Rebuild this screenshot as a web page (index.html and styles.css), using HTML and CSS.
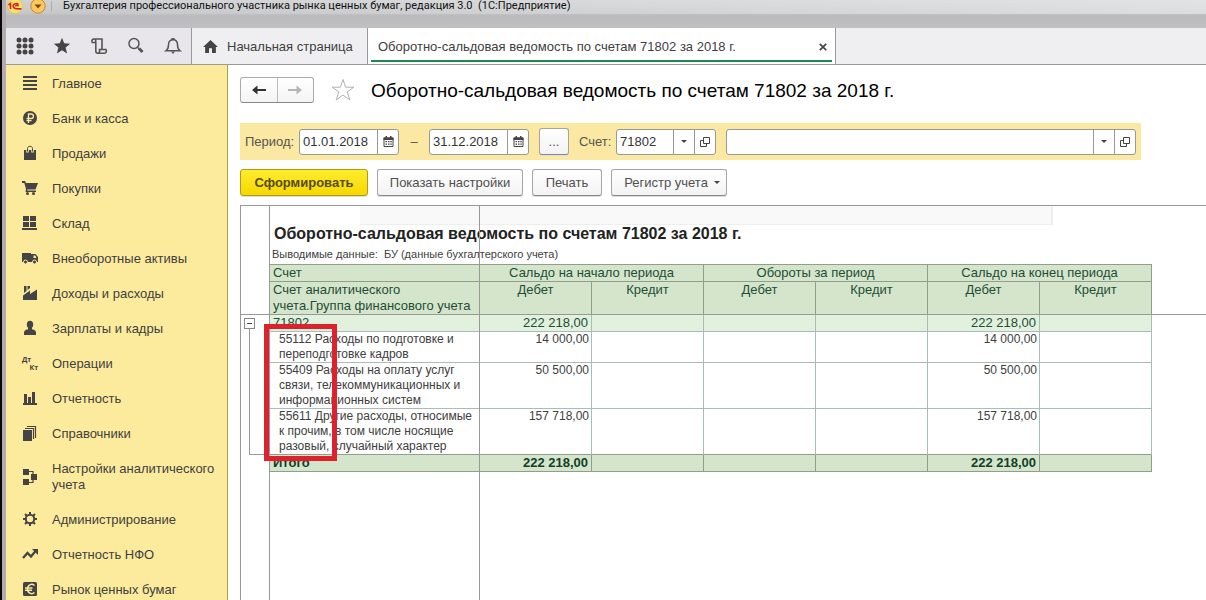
FILE: index.html
```html
<!DOCTYPE html>
<html lang="ru">
<head>
<meta charset="utf-8">
<title>Оборотно-сальдовая ведомость</title>
<link rel="stylesheet" href="styles.css">
</head>
<body>
<div class="window">
  <header class="titlebar">
    <svg class="logo" viewBox="0 0 16 16"><circle cx="8" cy="8" r="7.500" fill="#fbe26a" stroke="#e9c54c"/><path d="M1.500 7l2-1.500v5.500M11.500 6.500C10 4.800 6 5.500 6 8s3 3 8.500 2.800M11.500 8.200c-1-1.500-3-1-3 .3" fill="none" stroke="#d3202a" stroke-width="1.600"/></svg>
    <button class="menu-toggle" aria-label="Меню"><svg viewBox="0 0 16 16"><circle cx="8" cy="8" r="7.200" fill="#fcc75c" stroke="#c58a35"/><path d="M4.500 6.500h7L8 10.500z" fill="#7a4a12"/></svg></button>
    <span class="titlebar-sep"></span>
    <span class="titlebar-text">Бухгалтерия профессионального участника рынка ценных бумаг, редакция 3.0&nbsp; (1С:Предприятие)</span>
  </header>
  <nav class="tabs">
    <div class="tools">
      <button aria-label="Разделы"><svg viewBox="0 0 18 18" fill="#444"><circle cx="3" cy="3" r="2.500"/><circle cx="9" cy="3" r="2.500"/><circle cx="15" cy="3" r="2.500"/><circle cx="3" cy="9" r="2.500"/><circle cx="9" cy="9" r="2.500"/><circle cx="15" cy="9" r="2.500"/><circle cx="3" cy="15" r="2.500"/><circle cx="9" cy="15" r="2.500"/><circle cx="15" cy="15" r="2.500"/></svg></button>
      <button aria-label="Избранное"><svg viewBox="0 0 18 18"><path d="M9 .8l2.200 5.500 6 .4-4.600 3.800 1.500 5.900L9 13.200l-5.100 3.200 1.500-5.900L.8 6.700l6-.4z" fill="#444"/></svg></button>
      <button aria-label="История"><svg viewBox="0 0 18 18" fill="none" stroke="#555" stroke-width="1.600"><path d="M5.500 5.500H2.200C1.200 3.500 2.500 2 4 2h8v10.500M4 2c1.500 0 1.800 1 1.800 2.200V14c0 1.500 1 2.200 2 2.200h6.500c2 0 2.500-2 1.700-3.700H9.500c.5 2-.2 3.700-1.700 3.700"/></svg></button>
      <button aria-label="Поиск"><svg viewBox="0 0 18 18" fill="none" stroke="#555"><circle cx="7" cy="6.500" r="5" stroke-width="1.500"/><path d="M10.500 10.200l1.500 1.500" stroke-width="1.500"/><path d="M12 11.500l3.500 3.500" stroke-width="3"/></svg></button>
      <button aria-label="Уведомления"><svg viewBox="0 0 18 18"><path d="M2 13.800c2-1.500 2.500-3 2.500-6C4.500 4.500 6.500 2.800 9 2.800s4.500 1.700 4.500 5c0 3 .5 4.500 2.500 6z" fill="none" stroke="#555" stroke-width="1.500"/><path d="M7.500 1h3v2h-3zM7 14.500h4L9 17z" fill="#555"/></svg></button>
    </div>
    <button class="tab tab-home"><svg viewBox="0 0 16 14"><path d="M8 0l8 7.500h-2.200V14H9.600V9H6.400v5H2.200V7.500H0z" fill="#444"/></svg>Начальная страница</button>
    <div class="tab-active"><a href="#report">Оборотно-сальдовая ведомость по счетам 71802 за 2018 г.</a><button aria-label="Закрыть"><svg viewBox="0 0 8 8"><path d="M.8.8l6.400 6.400M7.200.8L.8 7.200" stroke="#444" stroke-width="1.700"/></svg></button></div>
  </nav>
  <div class="body">
    <aside class="sidebar">
      <a href="#"><svg viewBox="0 0 16 16"><path d="M1 1h14v2H1zM1 5h14v2H1zM1 9h14v2H1zM1 13h14v2H1z"/></svg>Главное</a>
      <a href="#"><svg viewBox="0 0 16 16"><circle cx="8" cy="8" r="7"/><path d="M6.500 13V4h2.700c3 0 3 4.500 0 4.500H4.500M4.500 10.700h5" fill="none" stroke="#fdeb9d" stroke-width="1.300"/></svg>Банк и касса</a>
      <a href="#"><svg viewBox="0 0 16 16"><path d="M2 5h12v10H2z"/><path d="M5.500 7.500V3.500c0-3 5-3 5 0v4" fill="none" stroke="#fdeb9d" stroke-width="2.500"/><path d="M5.500 6.500v-3c0-3 5-3 5 0v3" fill="none" stroke="#444" stroke-width="1"/></svg>Продажи</a>
      <a href="#"><svg viewBox="0 0 16 16"><path d="M0 1h3l1 2h12l-2.500 6.500H5.500l-.5 1h9V12H3.500L4 9 2.300 3H0z"/><circle cx="5.500" cy="13.500" r="1.500"/><circle cx="11.500" cy="13.500" r="1.500"/></svg>Покупки</a>
      <a href="#"><svg viewBox="0 0 16 16"><path d="M1 1h6v5H1zM8 1h6v5H8zM1 7h6v5H1zM8 7h6v5H8zM0 13h15v2H0z"/></svg>Склад</a>
      <a href="#"><svg viewBox="0 0 16 16"><path d="M0 3h9v9H0zM9 4h4.500L16 7v5H9z"/><path d="M11.500 5.500h1.800L14.500 8h-3z" fill="#fdeb9d"/><circle cx="3.500" cy="12" r="2" stroke="#fdeb9d"/><circle cx="12.500" cy="12" r="2" stroke="#fdeb9d"/></svg>Внеоборотные активы</a>
      <a href="#"><svg viewBox="0 0 16 16"><path d="M1 15V10.500L8 5.500V9l7-4.500V15zM2 1h2.500v5L2 8zM5.500 1H8v2L5.500 5z"/></svg>Доходы и расходы</a>
      <a href="#"><svg viewBox="0 0 16 16"><ellipse cx="8" cy="4.500" rx="3.200" ry="3.800"/><path d="M6 7h4v2.500H6zM2 15v-2.500C2 10.500 4 9.500 6 9.300h4c2 .2 4 1.200 4 3.200V15z"/></svg>Зарплаты и кадры</a>
      <a href="#"><span class="dtkt"><b>Дт</b><b>Кт</b></span>Операции</a>
      <a href="#"><svg viewBox="0 0 16 16"><path d="M2 4h3v9H2zM6 7h3v6H6zM10 2h3v11h-3zM1 13h14v2H1z"/></svg>Отчетность</a>
      <a href="#"><svg viewBox="0 0 16 16"><path d="M1 5h9v11H1z"/><path d="M3 3.500h8.500V14M5 1.500h8.500V13" fill="none" stroke="#444" stroke-width="1.200"/></svg>Справочники</a>
      <a href="#"><svg class="tall" viewBox="0 0 16 16"><path d="M1 0h6v6H1zM9 5h6v6H9zM1 10h6v6H1z"/><path d="M7 2.500h4V5M7 13.500h4V11" fill="none" stroke="#444" stroke-width="1.200"/></svg>Настройки аналитического учета</a>
      <a href="#"><svg viewBox="0 0 16 16"><circle cx="8" cy="8" r="4.200" fill="none" stroke="#444" stroke-width="2"/><path d="M8 1v3M8 12v3M1 8h3M12 8h3M3 3l2 2M11 11l2 2M13 3l-2 2M5 11l-2 2" stroke="#444" stroke-width="2"/></svg>Администрирование</a>
      <a href="#"><svg viewBox="0 0 16 16"><path d="M1 12l4.500-5 3.500 3.500 5-6" fill="none" stroke="#444" stroke-width="2.300"/><path d="M10 3h6v6z"/></svg>Отчетность НФО</a>
      <a href="#"><svg viewBox="0 0 16 16"><rect x="1" y="1" width="14" height="14" rx="1.500"/><path d="M12.500 4.500C9.500 2 5.500 4 5.500 8s4 6 7 3.500M3 7h7.500M3 9.200h7" fill="none" stroke="#fdeb9d" stroke-width="1.500"/></svg>Рынок ценных бумаг</a>
    </aside>
    <main class="main" id="report">
      <div class="heading">
        <div class="history"><button aria-label="Назад"><svg viewBox="0 0 14 10"><path d="M0 5l5.500-4.500V4H14v2H5.500v3.500z" fill="#333"/></svg></button><button aria-label="Вперед"><svg viewBox="0 0 14 10"><path d="M14 5L8.500.5V4H0v2h8.500v3.500z" fill="#b5b5b5"/></svg></button></div>
        <button class="fav" aria-label="В избранное"><svg viewBox="0 0 24 24"><path d="M12 1.500l2.600 7.700h8.200l-6.600 4.700 2.600 8L12 17l-6.800 4.900 2.600-8L1.200 9.200h8.200z" fill="#fff" stroke="#b0b0b0"/></svg></button>
        <h1>Оборотно-сальдовая ведомость по счетам 71802 за 2018 г.</h1>
      </div>
      <div class="filter">
        <label for="from">Период:</label>
        <div class="field date"><input id="from" value="01.01.2018"><button aria-label="Календарь"><svg viewBox="0 0 11 11"><path d="M1 2h9v8.500H1z" fill="none" stroke="#444"/><path d="M.5 1.500h10V4H.5zM2.500 0h1.500v2H2.500zM7 0h1.500v2H7zM2.500 5h1.500v1.300H2.500zM5 5h1.500v1.300H5zM7.300 5h1.500v1.300H7.300zM2.500 7.500h1.500v1.300H2.500zM5 7.500h1.500v1.300H5zM7.300 7.500h1.500v1.300H7.300z" fill="#444"/></svg></button></div>
        <span class="dash">–</span>
        <div class="field date"><input aria-label="Конец периода" value="31.12.2018"><button aria-label="Календарь"><svg viewBox="0 0 11 11"><path d="M1 2h9v8.500H1z" fill="none" stroke="#444"/><path d="M.5 1.500h10V4H.5zM2.500 0h1.500v2H2.500zM7 0h1.500v2H7zM2.500 5h1.500v1.300H2.500zM5 5h1.500v1.300H5zM7.300 5h1.500v1.300H7.300zM2.500 7.500h1.500v1.300H2.500zM5 7.500h1.500v1.300H5zM7.300 7.500h1.500v1.300H7.300z" fill="#444"/></svg></button></div>
        <button class="btn more">...</button>
        <label for="acc" class="acc-label">Счет:</label>
        <div class="field account"><input id="acc" value="71802"><button aria-label="Выбрать"><svg class="caret" viewBox="0 0 6 3"><path d="M0 0h6L3 3z" fill="#444"/></svg></button><button aria-label="Открыть"><svg class="open" viewBox="0 0 10 10"><path d="M3.500.5h6v6h-6zM3.500 3.500h-3v6h6v-3" fill="none" stroke="#444"/></svg></button></div>
        <div class="field wide"><input aria-label="Организация"><button aria-label="Выбрать"><svg class="caret" viewBox="0 0 6 3"><path d="M0 0h6L3 3z" fill="#444"/></svg></button><button aria-label="Открыть"><svg class="open" viewBox="0 0 10 10"><path d="M3.500.5h6v6h-6zM3.500 3.500h-3v6h6v-3" fill="none" stroke="#444"/></svg></button></div>
      </div>
      <div class="commands">
        <button class="btn primary">Сформировать</button>
        <button class="btn settings">Показать настройки</button>
        <button class="btn print">Печать</button>
        <button class="btn register">Регистр учета<svg class="caret" viewBox="0 0 6 3"><path d="M0 0h6L3 3z" fill="#444"/></svg></button>
      </div>
      <div class="report">
        <div class="gutter"><button aria-label="Свернуть"></button><div class="stem"></div></div>
        <div class="sheet">
          <div class="band"></div>
          <h2>Оборотно-сальдовая ведомость по счетам 71802 за 2018 г.</h2>
          <p>Выводимые данные:&nbsp; БУ (данные бухгалтерского учета)</p>
          <table>
            <colgroup><col class="c-name"><col span="6" class="c-sum"></colgroup>
            <thead>
              <tr><th class="name">Счет</th><th colspan="2">Сальдо на начало периода</th><th colspan="2">Обороты за период</th><th colspan="2">Сальдо на конец периода</th></tr>
              <tr><th class="name">Счет аналитического учета.Группа финансового учета</th><th>Дебет</th><th>Кредит</th><th>Дебет</th><th>Кредит</th><th>Дебет</th><th>Кредит</th></tr>
            </thead>
            <tbody>
              <tr class="group"><td class="name">71802</td><td>222 218,00</td><td></td><td></td><td></td><td>222 218,00</td><td></td></tr>
              <tr><td class="name">55112 Расходы по подготовке и переподготовке кадров</td><td>14 000,00</td><td></td><td></td><td></td><td>14 000,00</td><td></td></tr>
              <tr><td class="name">55409 Расходы на оплату услуг связи, телекоммуникационных и информационных систем</td><td>50 500,00</td><td></td><td></td><td></td><td>50 500,00</td><td></td></tr>
              <tr class="last"><td class="name">55611 Другие расходы, относимые к прочим, в том числе носящие разовый, случайный характер</td><td>157 718,00</td><td></td><td></td><td></td><td>157 718,00</td><td></td></tr>
            </tbody>
            <tfoot><tr><td class="name">Итого</td><td>222 218,00</td><td></td><td></td><td></td><td>222 218,00</td><td></td></tr></tfoot>
          </table>
        </div>
        <div class="freeze-row"></div>
        <div class="freeze-col"></div>
        <div class="marker"></div>
      </div>
    </main>
  </div>
</div>
</body>
</html>
```
FILE: styles.css
```css
* { box-sizing: border-box; }
body { margin: 0; background: #fff; color: #404040; font: 13px/16px "Liberation Sans", Arial, sans-serif; }
button, input { font: inherit; color: inherit; }
button { margin: 0; padding: 0; border: 0; background: none; }
svg { display: block; flex: none; }
a { color: inherit; text-decoration: none; }
h1, h2, p { margin: 0; font-weight: normal; }

.window { display: flex; flex-direction: column; height: 100vh; overflow: hidden; border-left: 2px solid #0a0708; box-shadow: inset 4px 0 #b3abb0; padding-left: 4px; }

.titlebar { display: flex; align-items: center; flex: none; height: 28px; padding: 0 0 16px 1px; background: linear-gradient(90deg, #0000, #fff6) 0 0 / 100% 14px no-repeat, linear-gradient(#d0d1d3, #c6c7c8 13px, #bababc 16px, #c0c0c2); color: #111; font: 11px/12px Roboto, "Liberation Sans", sans-serif; white-space: nowrap; }
.titlebar svg { width: 16px; height: 16px; }
.menu-toggle { margin-left: 7px; }
.titlebar-sep { width: 1px; height: 10px; margin: 0 11px 0 5px; background: #aaa; }

.tabs { display: flex; flex: none; height: 37px; background: #efeff1; border-bottom: 1px solid #999; }
.tools { display: flex; background: #e8e6ea; border-right: 1px solid #999; }
.tools button { display: grid; place-items: center; width: 37px; }
.tools svg { width: 18px; height: 18px; }
.tab { display: flex; align-items: center; gap: 9px; width: 175px; padding: 1px 0 0 11px; white-space: nowrap; }
.tab svg { width: 15px; height: 13px; }
.tab-active { display: flex; align-items: center; justify-content: space-between; width: 469px; padding: 1px 8px 0 10px; background: linear-gradient(#1e8a50, #1e8a50) 3px 32px / 461px 2px no-repeat #fff; border: solid #999; border-width: 0 1px; }
.tab-active svg { width: 8px; height: 8px; }

.body { display: flex; flex: 1; min-height: 0; }
.sidebar { flex: none; width: 222px; padding-top: 1px; background: #fdeb9d; border-right: 1px solid #a5a53c; overflow: hidden; }
.sidebar a { display: flex; align-items: flex-start; gap: 14px; padding: 10px 12px 9px 16px; }
.sidebar svg { width: 16px; height: 16px; margin-top: -1px; fill: #444; }
.sidebar .tall { margin-top: 8px; }
.dtkt { display: flex; flex-direction: column; flex: none; width: 16px; height: 16px; font: 7px/8px "Open Sans", sans-serif; }
.dtkt b:last-child { align-self: flex-end; }

.main { display: flex; flex-direction: column; flex: 1; min-width: 0; padding: 12px 0 0 12px; }
.heading { display: flex; align-items: center; height: 26px; }
.history { display: flex; width: 74px; height: 26px; border: 1px solid #aaa; border-bottom-color: #888; border-radius: 3px; background: linear-gradient(#fff, #f4f4f4); }
.history button { display: grid; flex: 1; place-items: center; }
.history button + button { border-left: 1px solid #bbb; }
.history svg { width: 14px; height: 10px; }
.fav { margin: 0 16px 0 17px; }
.fav svg { width: 24px; height: 24px; }
h1 { padding-top: 2px; color: #000; font-size: 19px; line-height: 24px; white-space: nowrap; }

.filter { display: flex; align-items: center; height: 37px; margin: 20px 65px 0 0; padding: 0 5px; background: #fbe8a2; color: #555; }
.filter label { flex: none; width: 54px; }
.filter .acc-label { width: 37px; margin-left: 10px; }
.field { display: flex; flex: none; height: 26px; background: #fff; border: 1px solid #999; border-radius: 3px; color: #333; overflow: hidden; }
.field input { flex: 1; min-width: 0; padding: 0 0 0 3px; border: 0; background: none; outline: 0; }
.field button { display: grid; flex: none; place-items: center; width: 21px; border-left: 1px solid #999; }
.date { width: 100px; }
.date svg { width: 11px; height: 11px; }
.account { width: 100px; }
.wide { flex: 1; margin-left: 10px; }
.caret { width: 6px; height: 3px; }
.open { width: 10px; height: 10px; }
.dash { width: 30px; text-align: center; }

.btn { height: 27px; border: 1px solid #a5a5a5; border-bottom-color: #888; border-radius: 3px; background: linear-gradient(#fff, #f3f3f3); box-shadow: 0 1px #ddd; color: #505050; white-space: nowrap; }
.more { width: 30px; margin-left: 10px; }
.commands { display: flex; gap: 9px; margin-top: 9px; }
.primary { width: 128px; border-color: #b39a10; background: linear-gradient(#ffec2e, #f5d800); color: #574a12; font-weight: bold; }
.settings { width: 146px; }
.print { width: 70px; }
.register { display: flex; align-items: center; justify-content: center; gap: 6px; width: 116px; padding-left: 6px; }

.report { position: relative; display: flex; flex: 1; min-height: 0; margin-top: 9px; border: solid #999; border-width: 1px 0 0 1px; }
.gutter { flex: none; width: 29px; padding: 112px 0 0 3px; border-right: 1px solid #999; }
.gutter button { display: block; width: 11px; height: 11px; border: 1px solid #888; background: linear-gradient(#444, #444) 2px 4px / 5px 1px no-repeat #fff; }
.stem { height: 126px; margin-left: 5px; border: solid #999; border-width: 0 0 1px 1px; }
.sheet { flex: 1; min-width: 0; }
.band { width: 693px; height: 19px; margin-left: 90px; background: #f9f9fa; border: solid #eee; border-width: 0 2px 1px 0; }
h2 { padding-left: 4px; color: #222; font-size: 16px; font-weight: bold; line-height: 18px; }
p { padding: 2px 0 0 2px; font-size: 11px; line-height: 19px; }
table { width: 882px; table-layout: fixed; border-spacing: 0; border-top: 1px solid #8fa08a; }
.c-name { width: 210px; }
.c-sum { width: 112px; }
th, td { padding: 0 2px; border: solid #a9bcb6; border-width: 0 1px 1px 0; vertical-align: top; }
th { background: #d5e5cb; border-color: #8fa08a; color: #1d4d36; font-weight: normal; line-height: 16px; }
td { height: 17px; font-size: 12px; line-height: 15px; text-align: right; }
.name { padding-left: 3px; text-align: left; }
tbody .name { padding: 0 0 0 9px; }
.group td { background: #e1f1dd; color: #1d4d36; font-size: 13px; line-height: 16px; padding-right: 3px; }
.group .name { padding-left: 3px; }
.last td { border-bottom-color: #8fa08a; }
tfoot td { background: #d5e5cb; border-color: #8fa08a; color: #104028; font-size: 13px; font-weight: bold; line-height: 16px; padding-right: 3px; }
.freeze-row { position: absolute; left: 0; right: 0; top: 108px; height: 1px; background: #999; }
.freeze-col { position: absolute; left: 238px; top: 0; bottom: 0; width: 1px; background: #999; }
.marker { position: absolute; left: 23px; top: 118px; width: 73px; height: 137px; border: 5px solid #dc222c; }
```
